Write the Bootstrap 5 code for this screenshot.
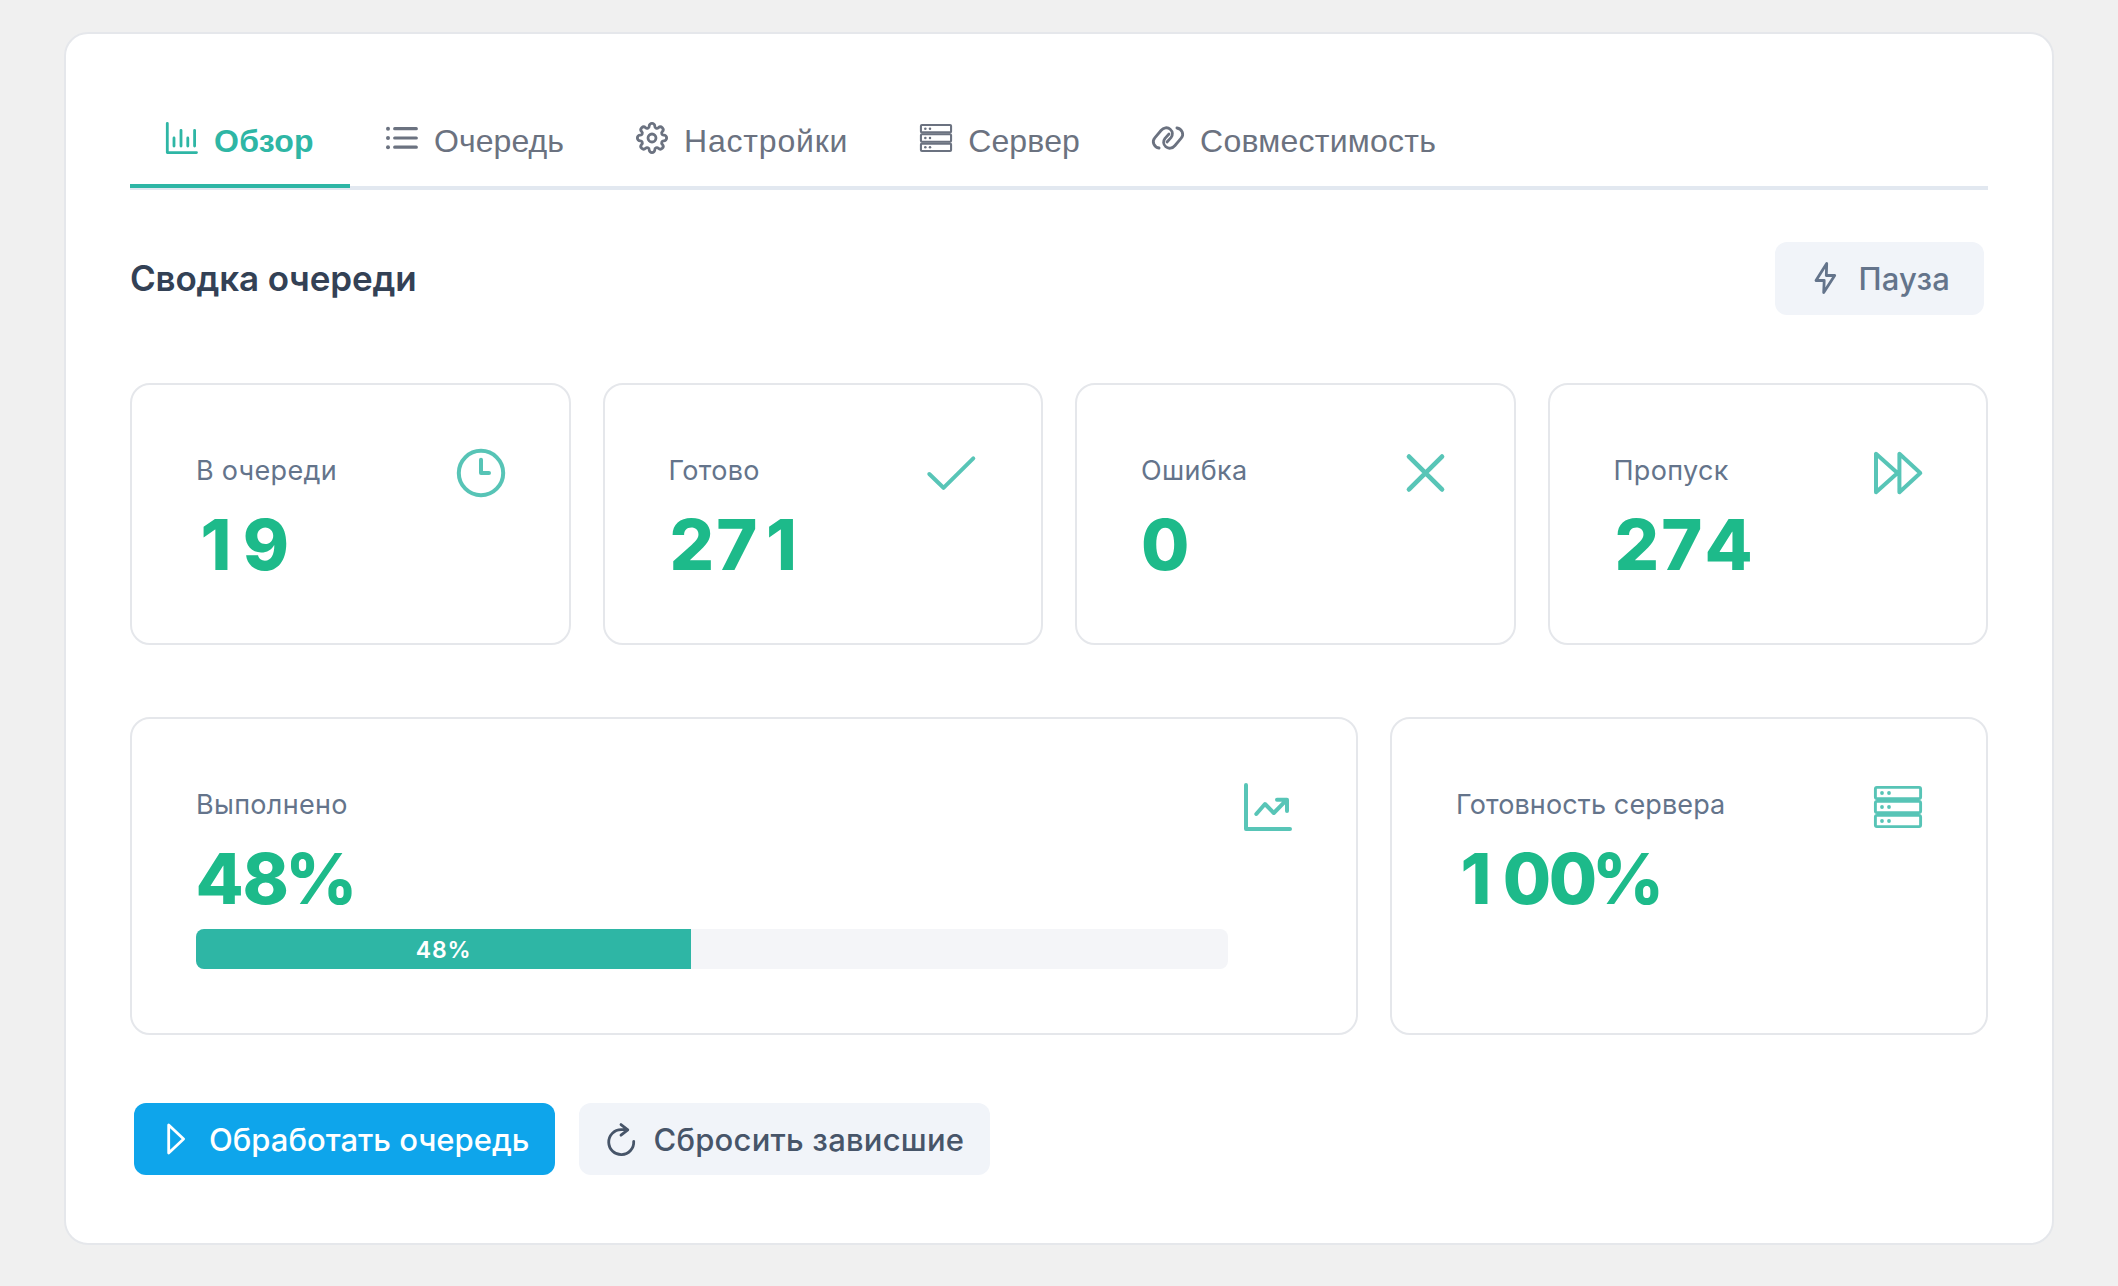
<!DOCTYPE html>
<html lang="ru">
<head>
<meta charset="utf-8">
<title>Сводка очереди</title>
<meta name="viewport" content="width=device-width, initial-scale=1">
<link href="https://cdn.jsdelivr.net/npm/bootstrap@5.3.0/dist/css/bootstrap.min.css" rel="stylesheet">
<style>
  body { background: #f0f0f0; font-family: Inter, "Noto Sans", sans-serif; padding: 32px 64px 0; min-height: 1286px; }
  svg { fill: none; stroke: currentColor; stroke-linecap: round; stroke-linejoin: round; overflow: visible; flex: none; display: block; }
  svg .dot { fill: currentColor; stroke: none; }
  .panel { border: 2px solid #e5e7eb; border-radius: 24px; padding: 64px; height: 1213px; }
  .queue-tabs { border-bottom: 4px solid #e2e8f0; height: 92px; font-family: "Liberation Sans", Arial, sans-serif; font-size: 32px; }
  .queue-tabs .nav-link { display: flex; align-items: center; gap: 16px; height: 90px; margin-bottom: -2px; padding: 0 36px; border: 0; border-bottom: 4px solid transparent; border-radius: 0; color: #6b7280; line-height: 48px; white-space: nowrap; }
  .queue-tabs .nav-link.active { color: #2eb6a5; border-bottom-color: #2eb6a5; background: none; font-weight: 700; }
  .queue-tabs svg { width: 32px; height: 32px; margin-bottom: 6px; }
  .ls-overview { letter-spacing: .3px; }
  .ls-queue { letter-spacing: .08px; }
  .ls-settings { letter-spacing: .79px; }
  .ls-server { letter-spacing: .17px; }
  .ls-compat { letter-spacing: .23px; }
  .summary-bar { margin-top: 52px; padding-right: 4px; }
  .summary-title { font-size: 35px; font-weight: 600; line-height: 54px; letter-spacing: -.18px; color: #334155; padding-bottom: 2px; }
  .action { display: flex; align-items: center; gap: 17px; height: 72px; padding: 2px 26px 0; border: 0; border-radius: 12px; font-size: 31px; font-weight: 500; line-height: 48px; white-space: nowrap; }
  .action svg { width: 32px; height: 32px; stroke-width: 2.8; margin-bottom: 2px; }
  .action-pause { height: 73px; padding: 0 34px; background: #f1f4f9; color: #64748b; letter-spacing: .2px; }
  .action-run { width: 421px; background: #0ea5eb; color: #fff; }
  .action-reset { width: 411px; background: #f1f4f9; color: #475569; letter-spacing: .22px; padding-left: 25.5px; }
  .tiles { gap: 32px; }
  .tile { border: 2px solid #e5e7eb; border-radius: 20px; padding: 64px; display: flex; flex-direction: row; gap: 16px; justify-content: space-between; }
  .tile > svg { width: 48px; height: 48px; color: #2eb6a5; opacity: .8; stroke-width: 4; }
  .tile > svg.rack-icon { stroke-width: 2.9; }
  .tile > svg.cross-icon { stroke-width: 4.7; }
  .tile-sm { height: 262px; flex: 1 1 0; }
  .tile-lg { height: 318px; }
  .tile-done { width: 1228px; }
  .tile-label { font-size: 27px; line-height: 42px; padding-top: 1px; letter-spacing: .3px; color: #64748b; white-space: nowrap; }
  .tile-label.wide-label { letter-spacing: .12px; }
  .tile-value { font-size: 70px; line-height: 69px; margin-top: 18px; font-weight: 800; font-kerning: none; color: #1dba8a; white-space: nowrap; }
  .fig { letter-spacing: 2.1px; padding-left: 1px; }
  .fig-one { letter-spacing: 11.2px; padding-left: 4.6px; }
  .fig-seven { letter-spacing: 8.5px; }
  .fig-four { letter-spacing: -1.2px; margin-left: -.6px; }
  .fig-zero { letter-spacing: -2.3px; }
  .fig-last { letter-spacing: -5.4px; }
  .fig-eight { letter-spacing: -3.7px; }
  .tile .progress { height: 40px; margin-top: 16px; border-radius: 8px; background: #f4f5f8; }
  .tile .progress-bar { background: #2eb6a5; font-size: 23px; font-weight: 600; letter-spacing: .9px; padding-top: 2px; }
  .mt-tiles { margin-top: 68px; }
  .mt-tiles-lg { margin-top: 72px; }
  .actions { margin-top: 68px; gap: 24px; padding-left: 4px; }
</style>
<script src="https://cdn.jsdelivr.net/npm/bootstrap@5.3.0/dist/js/bootstrap.bundle.min.js"></script>
</head>
<body>
<svg width="0" height="0" class="position-absolute">
  <symbol id="rack" viewBox="0 0 48 48" overflow="visible">
    <rect x="1.4" y="4.4" width="45.2" height="11.2" rx="1.5"/><rect x="1.4" y="18.4" width="45.2" height="11.2" rx="1.5"/><rect x="1.4" y="32.4" width="45.2" height="11.2" rx="1.5"/>
    <g class="dot"><circle cx="8" cy="10" r="1.9"/><circle cx="15" cy="10" r="1.9"/><circle cx="8" cy="24" r="1.9"/><circle cx="15" cy="24" r="1.9"/><circle cx="8" cy="38" r="1.9"/><circle cx="15" cy="38" r="1.9"/></g>
  </symbol>
</svg>
<main class="panel bg-white">
  <nav class="nav queue-tabs flex-nowrap">
    <a class="nav-link active" href="#"><svg viewBox="0 0 32 32" stroke-width="2.8"><path d="M1.3 1.3V30.6H30.5M8 16V24M15 8.3V24M21.8 16V24M28.6 8.3V24"/></svg><span class="ls-overview">Обзор</span></a>
    <a class="nav-link" href="#"><svg viewBox="0 0 32 32" stroke-width="3.2"><path d="M8.7 6.7H30.3M8.7 16H30.3M8.7 25.2H30.3"/><g class="dot"><circle cx="2" cy="6.7" r="2"/><circle cx="2" cy="16" r="2"/><circle cx="2" cy="25.2" r="2"/></g></svg><span class="ls-queue">Очередь</span></a>
    <a class="nav-link" href="#"><svg viewBox="-.5 -.5 33 33" stroke-width="2.9"><path d="M18.9 3.8A2.1 2.1 0 0 0 22.58 5.32A2.9 2.9 0 0 1 26.68 9.42A2.1 2.1 0 0 0 28.2 13.1A2.9 2.9 0 0 1 28.2 18.9A2.1 2.1 0 0 0 26.68 22.58A2.9 2.9 0 0 1 22.58 26.68A2.1 2.1 0 0 0 18.9 28.2A2.9 2.9 0 0 1 13.1 28.2A2.1 2.1 0 0 0 9.42 26.68A2.9 2.9 0 0 1 5.32 22.58A2.1 2.1 0 0 0 3.8 18.9A2.9 2.9 0 0 1 3.8 13.1A2.1 2.1 0 0 0 5.32 9.42A2.9 2.9 0 0 1 9.42 5.32A2.1 2.1 0 0 0 13.1 3.8A2.9 2.9 0 0 1 18.9 3.8Z"/><circle cx="16" cy="16" r="4.1"/></svg><span class="ls-settings">Настройки</span></a>
    <a class="nav-link" href="#"><svg stroke-width="3.1"><use href="#rack"/></svg><span class="ls-server">Сервер</span></a>
    <a class="nav-link" href="#"><svg viewBox="0 0 32 32" stroke-width="2.8"><path d="M7.1 26C2.2 25.2 -.6 19.8 2.8 15.8L9 8.5C11.5 5.5 15.5 4.8 18.2 7.2C20.9 9.6 21 13 19 15.6L15 20M24.9 6C29.8 6.8 32.6 12.2 29.2 16.2L23 23.5C20.5 26.5 16.5 27.2 13.8 24.8C11.1 22.4 11 19 13 16.4L17 12"/></svg><span class="ls-compat">Совместимость</span></a>
  </nav>

  <div class="summary-bar d-flex justify-content-between align-items-center">
    <h1 class="summary-title m-0">Сводка очереди</h1>
    <button class="btn action action-pause" type="button"><svg viewBox="0 0 32 32"><path d="M17.7 1.5L7 18.5H15.2L14.7 30.5L25.7 13.5H17.3Z"/></svg>Пауза</button>
  </div>

  <section class="tiles mt-tiles d-flex">
    <div class="card tile tile-sm"><div><div class="tile-label">В очереди</div><div class="tile-value"><span class="fig-one">1</span>9</div></div>
      <svg viewBox="0 0 48 48"><circle cx="24" cy="24" r="22.2"/><path d="M24 10.8V24H32"/></svg></div>
    <div class="card tile tile-sm"><div><div class="tile-label">Готово</div><div class="tile-value"><span class="fig">2</span><span class="fig-seven">7</span>1</div></div>
      <svg viewBox="0 0 48 48"><path d="M.3 25L14.5 38.8L44.3 9.3"/></svg></div>
    <div class="card tile tile-sm"><div><div class="tile-label">Ошибка</div><div class="tile-value">0</div></div>
      <svg class="cross-icon" viewBox="0 0 48 48"><path d="M7 7.6L40 40.4M40 7.6L7 40.4"/></svg></div>
    <div class="card tile tile-sm"><div><div class="tile-label">Пропуск</div><div class="tile-value"><span class="fig">274</span></div></div>
      <svg viewBox="0 0 48 48"><path d="M2 4.8V43.2L23.5 24ZM25.4 4.8V43.2L46.3 24Z"/></svg></div>
  </section>

  <section class="tiles mt-tiles-lg d-flex">
    <div class="card tile tile-lg tile-done"><div class="flex-grow-1"><div class="tile-label">Выполнено</div><div class="tile-value"><span class="fig-four">4</span><span class="fig-eight">8</span>%</div>
      <div class="progress" role="progressbar" aria-valuenow="48" aria-valuemin="0" aria-valuemax="100"><div class="progress-bar" style="width: 48%">48%</div></div></div>
      <svg viewBox="0 0 48 48"><path d="M2 2V46H46M12.3 31L21 21L29.8 30L42.6 16.8M33 16.8H43V28"/></svg></div>
    <div class="card tile tile-lg flex-grow-1"><div><div class="tile-label wide-label">Готовность сервера</div><div class="tile-value"><span class="fig-one">1</span><span class="fig-zero">0</span><span class="fig-last">0</span>%</div></div>
      <svg class="rack-icon" viewBox="0 0 48 48"><use href="#rack"/></svg></div>
  </section>

  <div class="actions d-flex">
    <button class="btn action action-run" type="button"><svg viewBox="0 0 32 32"><path d="M8.7 2V30L23.6 16Z"/></svg>Обработать очередь</button>
    <button class="btn action action-reset" type="button"><svg viewBox="0 0 32 32"><path d="M28.7 18.3A12.5 12.5 0 1 1 16.2 6.6H22.5M16 1.6L22.8 6.9L16 12.2"/></svg>Сбросить зависшие</button>
  </div>
</main>
</body>
</html>
